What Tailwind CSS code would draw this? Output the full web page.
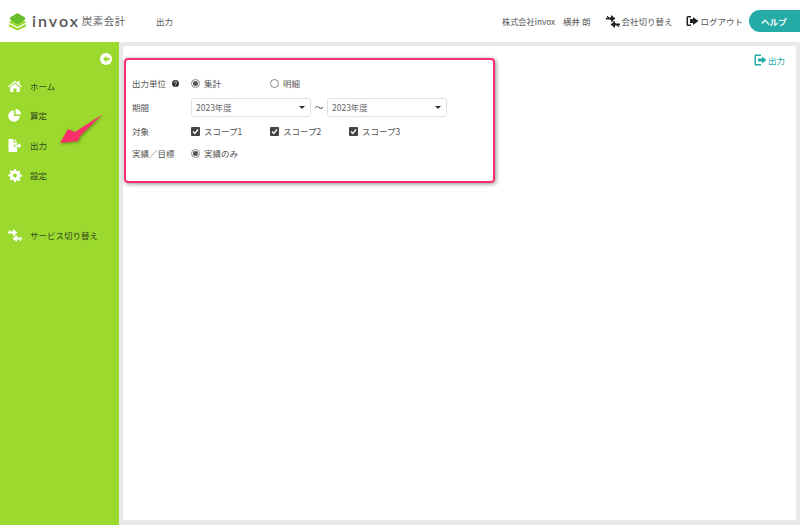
<!DOCTYPE html>
<html lang="ja">
<head>
<meta charset="utf-8">
<script src="https://cdn.jsdelivr.net/npm/@tailwindcss/browser@4"></script>
</head>
<body class="w-[800px] h-[525px] overflow-hidden bg-[#e9e9e9] text-[#555] font-['Noto_Sans_CJK_JP','Noto_Sans',sans-serif] text-[8.5px]">
<div class="relative flex flex-col h-[525px]">
  <header class="flex items-center h-[42px] bg-white shrink-0">
    <div class="flex items-center w-[156px] pl-[8px] shrink-0">
      <svg class="w-[19px] h-[19px] shrink-0" viewBox="0 0 19 19">
        <path d="M1 10 L9.500 5 L18 10 V14.500 L9.500 18.500 L1 14.500Z" fill="#9bd92f"/>
        <path d="M1 10.500 L9.500 15 L18 10.500 V12 L9.500 16.300 L1 12Z" fill="#fff"/>
        <path d="M9.500 1 L17 5.500 V7.500 L9.500 12.500 L2 7.500 V5.500Z" fill="#67bd2b"/>
      </svg>
      <span class="ml-[5px] font-['Lato',sans-serif] font-semibold text-[16px] leading-none tracking-[2px] text-[#555]">invox</span>
      <span class="ml-[2px] text-[10.5px] leading-none tracking-[0.5px] text-[#666]">炭素会計</span>
    </div>
    <span class="text-[8.5px]">出力</span>
    <div class="ml-auto flex items-center">
      <span class="text-[8.2px]">株式会社invox</span>
      <span class="ml-[8px]">横井 朗</span>
      <span class="ml-[16px] flex items-center gap-[1px]">
        <svg class="w-[14px] h-[13px]" viewBox="0 0 14 13" fill="#222"><path d="M1 1 13 12" stroke="#222" stroke-width="1"/><path d="M0 2.500h5V0l4.500 3.500L5 7V4.500H0zM14 8.500H9V6L4.500 9.500 9 13v-2.500h5z"/></svg>
        <span>会社切り替え</span>
      </span>
      <span class="ml-[14px] flex items-center gap-[1px]">
        <svg class="w-[13px] h-[12px]" viewBox="0 0 13 12" fill="#222"><path d="M5 1H2a1.500 1.500 0 0 0-1.500 1.500v7A1.500 1.500 0 0 0 2 11h3V9.500H2v-7h3z"/><path d="M7 2l5.500 4L7 10V8H4V4h3z"/></svg>
        <span>ログアウト</span>
      </span>
      <span class="ml-[6px] w-[51px] h-[22px] pr-[1px] flex items-center justify-center rounded-l-full bg-[#26aca7] text-white font-bold text-[8.5px]">ヘルプ</span>
    </div>
  </header>
  <div class="flex flex-1 min-h-0">
    <aside class="w-[119px] bg-[#9bd92f] shrink-0 text-[#33471a] relative">
      <div class="flex justify-end pr-[7px] pt-[11px]">
        <svg class="w-[12px] h-[12px]" viewBox="0 0 12 12"><circle cx="6" cy="6" r="6" fill="#fff"/><path d="M6.500 2.500 3 6l3.500 3.500V7.300H9.500V4.700H6.500z" fill="#9bd92f"/></svg>
      </div>
      <nav class="flex flex-col mt-[6px]">
        <div class="flex items-center h-[30px] pl-[8px] gap-[8px]">
          <svg class="w-[14px] h-[12px]" viewBox="0 0 14 12" fill="#fff"><path d="M7 0.500 0 6.500l.8.900L7 2.200l6.200 5.200.8-.9-2.500-2.100V1h-1.500v2.100z"/><path d="M2.200 7.500 7 3.500l4.800 4V12H8.500V8.500h-3V12H2.200z"/></svg>
          <span>ホーム</span>
        </div>
        <div class="flex items-center h-[29.500px] pl-[8px] gap-[8px]">
          <svg class="w-[14px] h-[13px]" viewBox="0 0 14 13" fill="#fff"><path d="M6 1.200A5.800 5.800 0 1 0 11.800 7H6z"/><path d="M7.500 0A5.500 5.500 0 0 1 13 5.500H7.500z"/></svg>
          <span>算定</span>
        </div>
        <div class="flex items-center h-[30px] pl-[8px] gap-[8px]">
          <svg class="w-[14px] h-[13px]" viewBox="0 0 14 13" fill="#fff"><path d="M0.500 0H5.500V3.500H9V5.500H6V8H9V13H0.500z"/><path d="M6.500 0 9 2.500H6.500zM7 5.800h3.500V4l3 2.800-3 2.800V7.800H7z"/></svg>
          <span>出力</span>
        </div>
        <div class="flex items-center h-[30px] pl-[8px] gap-[8px]">
          <svg class="w-[14px] h-[13px]" viewBox="0 0 14 14" fill="#fff"><path fill-rule="evenodd" d="M6 0h2l.4 2 1.300.6 1.700-1.100 1.400 1.400-1.100 1.700.6 1.300 2 .4v2l-2 .4-.6 1.300 1.100 1.700-1.400 1.400-1.700-1.100-1.300.6L8 14H6l-.4-2-1.300-.6-1.700 1.100-1.400-1.400 1.100-1.700-.6-1.300-2-.4V6l2-.4.6-1.300-1.100-1.700 1.400-1.400 1.700 1.100 1.300-.6zM7 4.800a2.200 2.200 0 1 0 0 4.400 2.200 2.200 0 0 0 0-4.400z"/></svg>
          <span>設定</span>
        </div>
        <div class="flex items-center h-[30px] pl-[8px] gap-[8px] mt-[30px]">
          <svg class="w-[14px] h-[13px]" viewBox="0 0 14 13" fill="#fff"><path d="M1 1 13 12" stroke="#fff" stroke-width="1"/><path d="M0 2.500h5V0l4.500 3.500L5 7V4.500H0zM14 8.500H9V6L4.500 9.500 9 13v-2.500h5z"/></svg>
          <span>サービス切り替え</span>
        </div>
      </nav>
    </aside>
    <main class="flex-1 pl-[4px] pr-[4px] pt-[4px] pb-[5px] min-w-0">
      <div class="h-full bg-white rounded-[3px] relative pl-[9px] pt-[29px]">
        <div class="absolute right-[11px] top-[8px] flex items-center gap-[1px] text-[#26aca7]">
          <svg class="w-[13px] h-[12px]" viewBox="0 0 13 12" fill="#26aca7"><path d="M7 0.500H1.500A1 1 0 0 0 .500 1.500v9a1 1 0 0 0 1 1H7V10H2V2h5z"/><path d="M8 2.500 12.500 6 8 9.500V7.500H4v-3h4z"/></svg>
          <span>出力</span>
        </div>
        <div class="flex items-center h-[16px]">
          <span class="w-[59px] flex items-center gap-[6px] shrink-0"><span>出力単位</span>
            <svg class="w-[7px] h-[7px]" viewBox="0 0 8 8"><circle cx="4" cy="4" r="4" fill="#333"/><path d="M2.800 3c0-1.600 2.500-1.600 2.500 0 0 .9-1.200.9-1.200 1.800" stroke="#fff" stroke-width=".9" fill="none"/><circle cx="4.100" cy="6.200" r=".55" fill="#fff"/></svg>
          </span>
          <label class="flex items-center w-[79px] gap-[4px]"><span class="w-[9px] h-[9px] rounded-full border border-[#888] flex items-center justify-center"><span class="w-[5px] h-[5px] rounded-full bg-[#555]"></span></span><span>集計</span></label>
          <label class="flex items-center gap-[4px]"><span class="w-[9px] h-[9px] rounded-full border border-[#888]"></span><span>明細</span></label>
        </div>
        <div class="flex items-center h-[19px] mt-[7px]">
          <span class="w-[59px] shrink-0">期間</span>
          <div class="flex items-center justify-between w-[120px] h-[19px] rounded-[3px] border border-[#dde2ea] pl-[4px] pr-[5px]"><span class="text-[#666]">2023年度</span><span class="w-0 h-0 border-x-[3px] border-x-transparent border-t-[3px] border-t-[#333]"></span></div>
          <span class="w-[16px] text-center text-[9px]">～</span>
          <div class="flex items-center justify-between w-[120px] h-[19px] rounded-[3px] border border-[#dde2ea] pl-[4px] pr-[5px]"><span class="text-[#666]">2023年度</span><span class="w-0 h-0 border-x-[3px] border-x-transparent border-t-[3px] border-t-[#333]"></span></div>
        </div>
        <div class="flex items-center h-[16px] mt-[6px]">
          <span class="w-[59px] shrink-0">対象</span>
          <label class="flex items-center w-[79px] gap-[4px]"><svg class="w-[9px] h-[9px]" viewBox="0 0 9 9"><rect width="9" height="9" rx="1" fill="#444"/><path d="M2 4.500 3.800 6.500 7 2.500" stroke="#fff" stroke-width="1.300" fill="none"/></svg><span>スコープ1</span></label>
          <label class="flex items-center w-[79px] gap-[4px]"><svg class="w-[9px] h-[9px]" viewBox="0 0 9 9"><rect width="9" height="9" rx="1" fill="#444"/><path d="M2 4.500 3.800 6.500 7 2.500" stroke="#fff" stroke-width="1.300" fill="none"/></svg><span>スコープ2</span></label>
          <label class="flex items-center gap-[4px]"><svg class="w-[9px] h-[9px]" viewBox="0 0 9 9"><rect width="9" height="9" rx="1" fill="#444"/><path d="M2 4.500 3.800 6.500 7 2.500" stroke="#fff" stroke-width="1.300" fill="none"/></svg><span>スコープ3</span></label>
        </div>
        <div class="flex items-center h-[16px] mt-[6px]">
          <span class="w-[59px] shrink-0">実績／目標</span>
          <label class="flex items-center gap-[4px]"><span class="w-[9px] h-[9px] rounded-full border border-[#888] flex items-center justify-center"><span class="w-[5px] h-[5px] rounded-full bg-[#555]"></span></span><span>実績のみ</span></label>
        </div>
      </div>
    </main>
  </div>
  <div class="absolute left-[124px] top-[58px] w-[371px] h-[125px] rounded-[4px] border-[2px] border-[#fb2f6b] shadow-[1px_1px_4px_rgba(0,0,0,0.45)]"></div>
  <svg class="absolute left-[55px] top-[108px] w-[52px] h-[42px]" viewBox="0 0 52 42"><path d="M48 6 L25 28 L23 33 L5 35 L13 21 L20 24 Z" fill="#fb2f6b" style="filter:drop-shadow(1px 1px 1.500px rgba(0,0,0,.35))"/></svg>
</div>
</body>
</html>
